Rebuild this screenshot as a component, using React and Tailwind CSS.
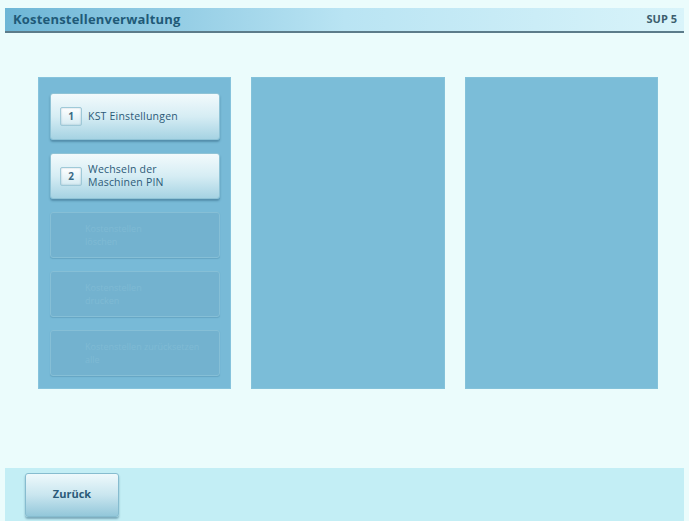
import React from "react";

const font = { fontFamily: '"Open Sans", "Noto Sans", "Liberation Sans", sans-serif' };

function ActiveButton({ num, h, children }) {
  return (
    <div
      className={`${h} rounded-[3px] border border-[#8fc3d6] bg-gradient-to-b from-[#f2fafc] via-[#d6edf4] to-[#a6d3e3] shadow-[0_2px_2px_rgba(40,90,120,0.45)] flex items-center pl-[9px]`}
    >
      <div className="shrink-0 w-[22px] h-[19px] rounded-[2px] border border-[#9fc9d8] bg-gradient-to-b from-[#ffffff] to-[#d5ebf2] flex items-center justify-center text-[10px] font-bold text-[#3b6a85] shadow-[inset_0_0_2px_rgba(60,110,140,0.4)]">
        {num}
      </div>
      <div className="ml-[6px] text-[10.5px] leading-[13px] text-[#2c5a78] tracking-[0.2px]">{children}</div>
    </div>
  );
}

function DisabledButton({ children }) {
  return (
    <div className="h-[46px] rounded-[3px] border border-[#86bfd6] bg-[#73b2cf] shadow-[0_1px_1px_rgba(60,120,150,0.3)] flex items-center pl-[34px] text-[9px] leading-[13px] text-[#7fbad4]">
      {children}
    </div>
  );
}

export default function App() {
  return (
    <div className="w-[689px] h-[521px] bg-[#ebfcfc] flex flex-col overflow-hidden" style={font}>
      <div className="mt-[8px] mx-[5px] h-[25px] border-b-2 border-[#5c7c8a] bg-gradient-to-r from-[#6db6d6] via-[#b9e4f3] to-[#d9f4fa] flex items-center justify-between pl-[8px] pr-[7px]">
        <span className="text-[13px] font-bold text-[#1f5a78] tracking-[0.2px]">Kostenstellenverwaltung</span>
        <span className="text-[11px] font-bold text-[#3c5e6e]">SUP 5</span>
      </div>

      <div className="flex gap-[20px] pl-[38px] pt-[44px]">
        <div className="w-[193px] h-[312px] bg-[#78bad7] border border-[#86c3dc] flex flex-col gap-[13px] pl-[11px] pr-[10px] pt-[15px]">
          <ActiveButton num="1" h="h-[47px]">KST Einstellungen</ActiveButton>
          <ActiveButton num="2" h="h-[46px]">
            Wechseln der
            <br />
            Maschinen PIN
          </ActiveButton>
          <DisabledButton>
            Kostenstellen
            <br />
            löschen
          </DisabledButton>
          <DisabledButton>
            Kostenstellen
            <br />
            drucken
          </DisabledButton>
          <DisabledButton>
            Kostenstellen zurücksetzen
            <br />
            alle
          </DisabledButton>
        </div>
        <div className="w-[194px] h-[312px] bg-[#7bbdd8] border border-[#84c2da]" />
        <div className="w-[193px] h-[312px] bg-[#7bbdd8] border border-[#84c2da]" />
      </div>

      <div className="mt-auto mx-[5px] h-[53px] bg-[#c3eef5] flex items-center pl-[20px]">
        <div className="w-[94px] h-[44px] rounded-[3px] border border-[#86bccf] bg-gradient-to-b from-[#eef9fc] via-[#c9e6ef] to-[#93c7da] shadow-[0_2px_2px_rgba(40,90,120,0.45)] flex items-center justify-center text-[11px] font-bold text-[#2a5a78]">
          Zurück
        </div>
      </div>
    </div>
  );
}
